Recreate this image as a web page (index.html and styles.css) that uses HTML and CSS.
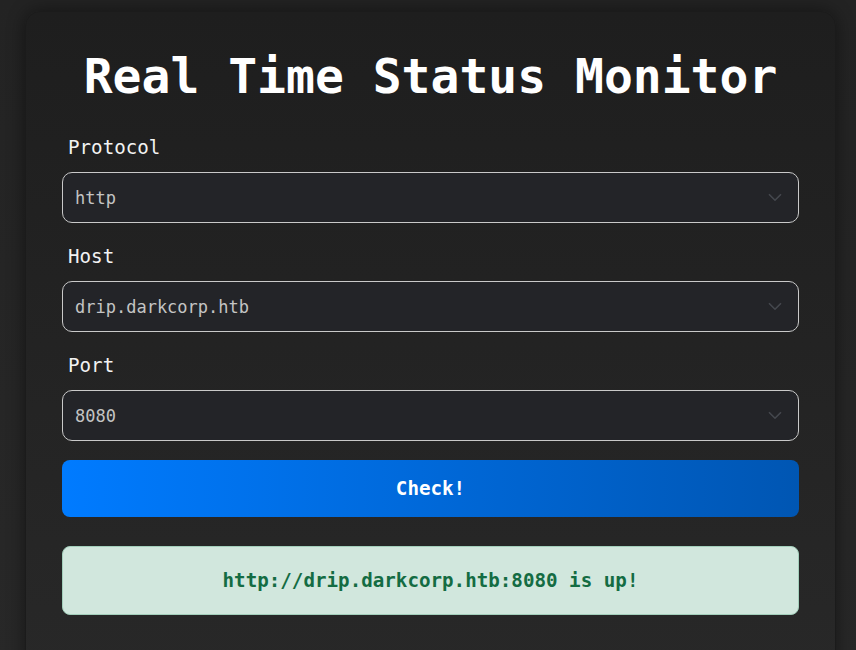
FILE: index.html
```html
<!DOCTYPE html>
<html lang="en">
<head>
<meta charset="utf-8">
<title>Real Time Status Monitor</title>
<link rel="stylesheet" href="styles.css">
</head>
<body>
<main class="card">
  <h1 class="title">Real Time Status Monitor</h1>
  <form class="form">
    <div class="group">
      <label class="label" for="protocol">Protocol</label>
      <div class="select-wrap">
        <select id="protocol" class="select"><option>http</option></select>
        <svg class="chevron" width="14" height="9" viewBox="0 0 14 9"><path d="M1 1.2 L7 7.2 L13 1.2" fill="none" stroke="#45484e" stroke-width="1.6"/></svg>
      </div>
    </div>
    <div class="group">
      <label class="label" for="host">Host</label>
      <div class="select-wrap">
        <select id="host" class="select"><option>drip.darkcorp.htb</option></select>
        <svg class="chevron" width="14" height="9" viewBox="0 0 14 9"><path d="M1 1.2 L7 7.2 L13 1.2" fill="none" stroke="#45484e" stroke-width="1.6"/></svg>
      </div>
    </div>
    <div class="group">
      <label class="label" for="port">Port</label>
      <div class="select-wrap">
        <select id="port" class="select"><option>8080</option></select>
        <svg class="chevron" width="14" height="9" viewBox="0 0 14 9"><path d="M1 1.2 L7 7.2 L13 1.2" fill="none" stroke="#45484e" stroke-width="1.6"/></svg>
      </div>
    </div>
    <button type="button" class="btn">Check!</button>
  </form>
  <div class="alert">http://drip.darkcorp.htb:8080 is up!</div>
</main>
</body>
</html>
```

FILE: styles.css
```css
html, body {
  margin: 0;
  padding: 0;
}
body {
  background: linear-gradient(to bottom, #232323, #282828);
  min-height: 650px;
  font-family: "DejaVu Sans Mono", "Liberation Mono", monospace;
  color: #f2f2f2;
  overflow: hidden;
}
.card {
  box-sizing: border-box;
  width: 811px;
  margin: 11px 0 0 25px;
  padding: 36px 36px 60px 36px;
  border: 1px solid #1b1b1b;
  border-radius: 15px;
  background: linear-gradient(to bottom, #1e1e1e, #282828);
  box-shadow: 0 0 18px rgba(0, 0, 0, 0.45);
}
.title {
  margin: 0 0 32px 0;
  text-align: center;
  font-size: 48px;
  font-weight: bold;
  line-height: 56px;
  color: #ffffff;
}
.form {
  display: flex;
  flex-direction: column;
}
.group {
  display: flex;
  flex-direction: column;
  margin-bottom: 22px;
}
.label {
  font-size: 19.2px;
  line-height: 22px;
  margin: 1px 0 13px 6px;
  color: #f2f2f2;
}
.select-wrap {
  position: relative;
}
.select {
  box-sizing: border-box;
  display: block;
  width: 100%;
  height: 51px;
  margin: 0;
  padding: 0 12px;
  appearance: none;
  -webkit-appearance: none;
  background: #232428;
  border: 1px solid #c9c9c9;
  border-radius: 10px;
  color: #c4c4c4;
  font-family: "DejaVu Sans Mono", "Liberation Mono", monospace;
  font-size: 17px;
  outline: none;
}
.chevron {
  position: absolute;
  right: 17px;
  top: 21px;
}
.btn {
  box-sizing: border-box;
  height: 57px;
  margin: -3px 0 0 0;
  border: none;
  border-radius: 8px;
  background: linear-gradient(to right, #007bff, #0056b3);
  color: #ffffff;
  font-family: "DejaVu Sans Mono", "Liberation Mono", monospace;
  font-size: 19.2px;
  font-weight: bold;
  cursor: pointer;
}
.alert {
  box-sizing: border-box;
  height: 69px;
  margin-top: 29px;
  display: flex;
  align-items: center;
  justify-content: center;
  background: #d1e7dd;
  border: 1px solid #a3cfbb;
  border-radius: 8px;
  color: #146c43;
  font-size: 19.2px;
  font-weight: bold;
}
```
